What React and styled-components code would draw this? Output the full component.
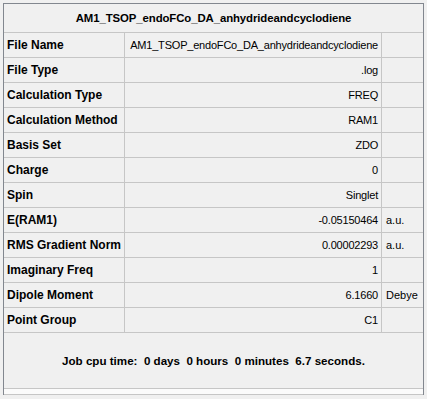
import React from 'react'
import styled, { createGlobalStyle } from 'styled-components'

const rows = [
  { label: 'File Name', value: 'AM1_TSOP_endoFCo_DA_anhydrideandcyclodiene', unit: '' },
  { label: 'File Type', value: '.log', unit: '' },
  { label: 'Calculation Type', value: 'FREQ', unit: '' },
  { label: 'Calculation Method', value: 'RAM1', unit: '' },
  { label: 'Basis Set', value: 'ZDO', unit: '' },
  { label: 'Charge', value: '0', unit: '' },
  { label: 'Spin', value: 'Singlet', unit: '' },
  { label: 'E(RAM1)', value: '-0.05150464', unit: 'a.u.' },
  { label: 'RMS Gradient Norm', value: '0.00002293', unit: 'a.u.' },
  { label: 'Imaginary Freq', value: '1', unit: '' },
  { label: 'Dipole Moment', value: '6.1660', unit: 'Debye' },
  { label: 'Point Group', value: 'C1', unit: '' },
]

function App() {
  return (
    <>
      <GlobalStyle />
      <Page>
        <Frame>
          <TitleRow>AM1_TSOP_endoFCo_DA_anhydrideandcyclodiene</TitleRow>
          {rows.map((r) => (
            <Row key={r.label}>
              <Label>{r.label}</Label>
              <Value>{r.value}</Value>
              <Unit>{r.unit}</Unit>
            </Row>
          ))}
          <Footer>Job cpu time:  0 days  0 hours  0 minutes  6.7 seconds.</Footer>
          <Strip />
        </Frame>
      </Page>
    </>
  )
}

const GlobalStyle = createGlobalStyle`
  html, body {
    margin: 0;
    background: #f0f0f0;
  }
  body {
    font-family: "Liberation Sans", Arial, sans-serif;
    color: #000;
  }
`

const Page = styled.div`
  padding: 3px;
  width: 427px;
  height: 399px;
  box-sizing: border-box;
`

const Frame = styled.div`
  width: 421px;
  box-sizing: border-box;
  border: 1px solid #82878f;
  border-bottom: none;
  background: #f0f0f0;
`

const TitleRow = styled.div`
  height: 28px;
  border-bottom: 1px solid #c6c6c6;
  display: flex;
  align-items: center;
  justify-content: center;
  font-weight: bold;
  font-size: 11.4px;
  letter-spacing: -0.1px;
`

const Row = styled.div`
  display: grid;
  grid-template-columns: 121px 257px 1fr;
  height: 25px;
  box-sizing: border-box;
  border-bottom: 1px solid #c6c6c6;
`

const Cell = styled.div`
  display: flex;
  align-items: center;
  white-space: nowrap;
  overflow: hidden;
`

const Label = styled(Cell)`
  border-right: 1px solid #c6c6c6;
  padding-left: 3px;
  font-weight: bold;
  font-size: 12px;
`

const Value = styled(Cell)`
  border-right: 1px solid #c6c6c6;
  justify-content: flex-end;
  padding-right: 3px;
  font-size: 11px;
  letter-spacing: -0.2px;
`

const Unit = styled(Cell)`
  padding-left: 4px;
  font-size: 11px;
`

const Footer = styled.div`
  height: 55px;
  border-bottom: 1px solid #c6c6c6;
  display: flex;
  align-items: center;
  justify-content: center;
  white-space: pre;
  font-weight: bold;
  font-size: 11.6px;
`

const Strip = styled.div`
  height: 5px;
  background: #fbfbfb;
  border-bottom: 1px solid #c6c6c6;
`

export default App
